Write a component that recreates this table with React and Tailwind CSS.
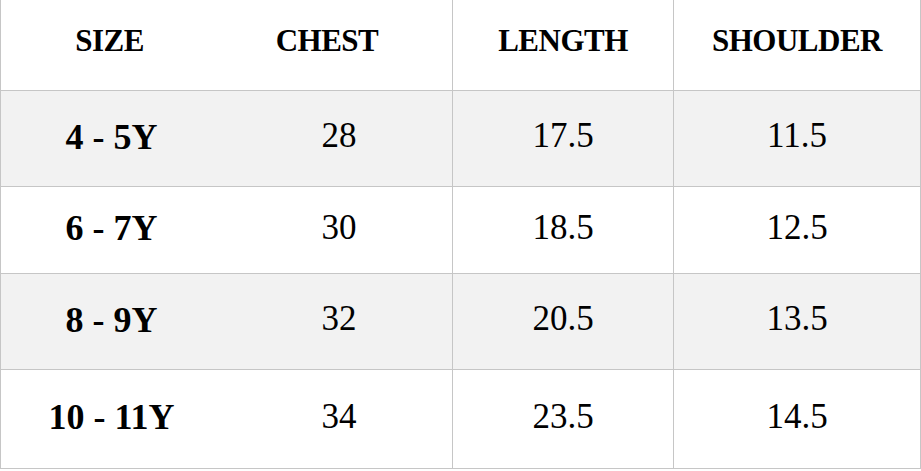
const header = ['SIZE', 'CHEST', 'LENGTH', 'SHOULDER'];

const rows = [
  { size: '4 - 5Y', chest: '28', length: '17.5', shoulder: '11.5', h: 'h-[96px]', shade: true },
  { size: '6 - 7Y', chest: '30', length: '18.5', shoulder: '12.5', h: 'h-[87px]', shade: false },
  { size: '8 - 9Y', chest: '32', length: '20.5', shoulder: '13.5', h: 'h-[96px]', shade: true },
  { size: '10 - 11Y', chest: '34', length: '23.5', shoulder: '14.5', h: 'h-[98px]', shade: false },
];

export default function App() {
  return (
    <div className="w-[921px] h-[471px] bg-white font-['Liberation_Serif',serif] text-black">
      <div className="border-l border-r border-b border-[#c6c6c6] w-[921px]">
        {/* header row */}
        <div className="grid grid-cols-[217px_235px_221px_246px] h-[91px] border-b border-[#c6c6c6]">
          <div className="flex items-center justify-center pb-2 text-[31px] font-bold tracking-[-0.5px]">{header[0]}</div>
          <div className="flex items-center justify-center pb-2 pr-4 text-[31px] font-bold tracking-[-0.5px] border-r border-[#c6c6c6]">{header[1]}</div>
          <div className="flex items-center justify-center pb-2 text-[31px] font-bold tracking-[-0.5px] border-r border-[#c6c6c6]">{header[2]}</div>
          <div className="flex items-center justify-center pb-2 text-[31px] font-bold tracking-[-0.5px]">{header[3]}</div>
        </div>

        {rows.map((r, i) => (
          <div
            key={r.size}
            className={`grid grid-cols-[217px_235px_221px_246px] ${r.h} ${r.shade ? 'bg-[#f2f2f2]' : 'bg-white'} ${i < rows.length - 1 ? 'border-b border-[#c6c6c6]' : ''}`}
          >
            <div className="flex items-center justify-center pb-1 pl-1 text-[36px] font-bold">{r.size}</div>
            <div className="flex items-center justify-center pb-1 pl-2 text-[35px] border-r border-[#c6c6c6]">{r.chest}</div>
            <div className="flex items-center justify-center pb-1 text-[35px] border-r border-[#c6c6c6]">{r.length}</div>
            <div className="flex items-center justify-center pb-1 text-[35px]">{r.shoulder}</div>
          </div>
        ))}
      </div>
    </div>
  );
}
